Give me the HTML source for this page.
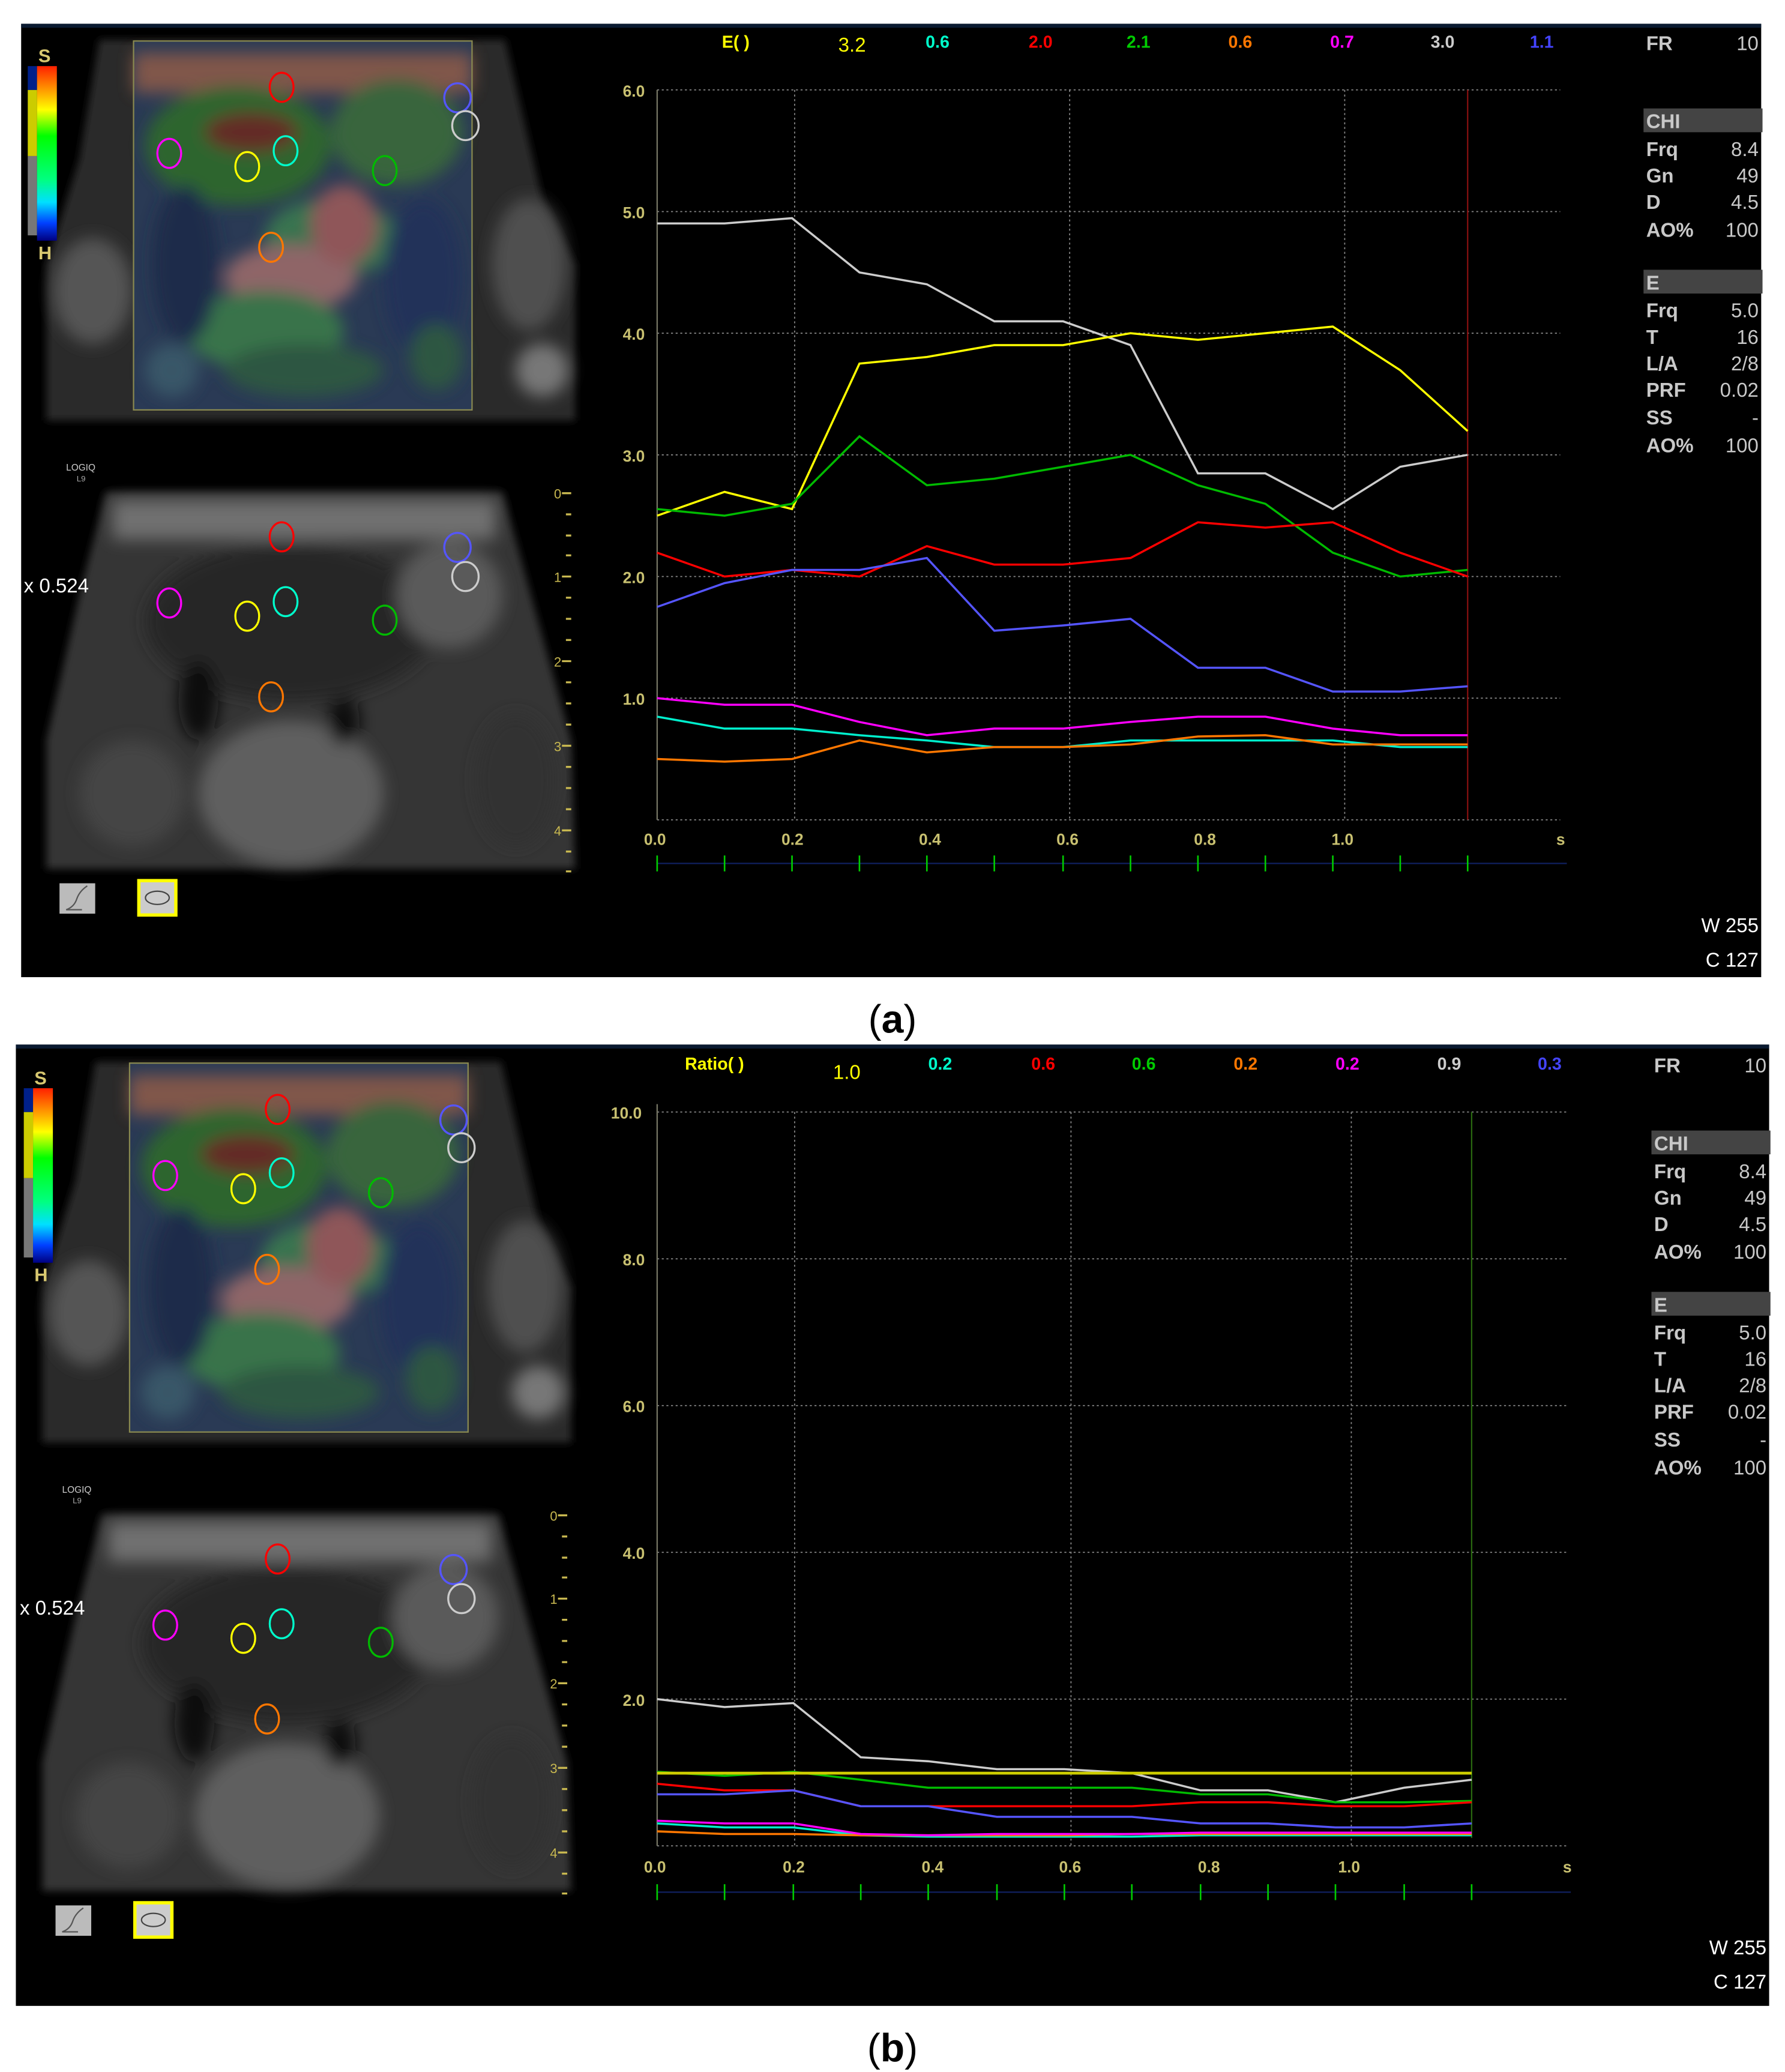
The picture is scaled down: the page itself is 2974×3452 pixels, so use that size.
<!DOCTYPE html>
<html><head><meta charset="utf-8"><style>
html,body{margin:0;padding:0;background:#fff;width:2974px;height:3452px;overflow:hidden}
svg{display:block}
text{font-family:"Liberation Sans",sans-serif}
</style></head><body>
<svg width="2974" height="3452" viewBox="0 0 1350 1567" preserveAspectRatio="none" xmlns="http://www.w3.org/2000/svg">
<defs>
<filter id="bl" x="-20%" y="-20%" width="140%" height="140%"><feGaussianBlur stdDeviation="6"/></filter>
<filter id="bl2" x="-20%" y="-20%" width="140%" height="140%"><feGaussianBlur stdDeviation="3"/></filter>
<linearGradient id="cb" x1="0" y1="0" x2="0" y2="1">
<stop offset="0" stop-color="#ff2000"/><stop offset="0.25" stop-color="#ffff00"/><stop offset="0.4" stop-color="#00ff00"/><stop offset="0.65" stop-color="#00ff80"/><stop offset="0.78" stop-color="#00e0ff"/><stop offset="0.9" stop-color="#0040ff"/><stop offset="1" stop-color="#000080"/>
</linearGradient>
<g id="left">
 <polygon points="75,30 382,30 410,150 435,200 435,318 35,318 35,200 60,120" fill="#2a2a2a" filter="url(#bl2)"/>
 <g filter="url(#bl)">
  <ellipse cx="70" cy="220" rx="30" ry="40" fill="#555"/>
  <ellipse cx="400" cy="200" rx="28" ry="50" fill="#505050"/>
  <ellipse cx="410" cy="280" rx="20" ry="20" fill="#777"/>
 </g>
 <rect x="101" y="31" width="256" height="279" fill="#2a3a55"/>
 <g filter="url(#bl)" opacity="0.9">
  <rect x="101" y="40" width="256" height="30" fill="#8a5a4a"/>
  <ellipse cx="180" cy="110" rx="70" ry="45" fill="#2d6a2a"/>
  <ellipse cx="190" cy="100" rx="35" ry="15" fill="#6a2a20"/>
  <ellipse cx="300" cy="100" rx="50" ry="40" fill="#3a6a3a"/>
  <ellipse cx="250" cy="180" rx="50" ry="30" fill="#3a7a50"/>
  <ellipse cx="220" cy="210" rx="50" ry="25" fill="#9a6a6a"/>
  <ellipse cx="260" cy="170" rx="25" ry="30" fill="#9a5a5a"/>
  <ellipse cx="200" cy="250" rx="60" ry="30" fill="#3a7a4a"/>
  <ellipse cx="140" cy="200" rx="25" ry="60" fill="#1e2a4a"/>
  <ellipse cx="320" cy="210" rx="30" ry="60" fill="#22305a"/>
  <ellipse cx="230" cy="280" rx="60" ry="20" fill="#2e5a40"/>
  <ellipse cx="330" cy="270" rx="20" ry="25" fill="#2e5a40"/>
  <ellipse cx="130" cy="280" rx="20" ry="20" fill="#3a5a6a"/>
 </g>
 <rect x="101" y="31" width="256" height="279" fill="none" stroke="#8a8a50" stroke-width="1"/>
 <rect x="21" y="68" width="7" height="50" fill="#ff0" opacity="0.8"/>
 <rect x="21" y="50" width="7" height="18" fill="#00208a"/>
 <rect x="21" y="118" width="7" height="60" fill="#777"/>
 <rect x="28" y="50" width="15" height="132" fill="url(#cb)"/>
 <text x="29" y="47" font-size="14" fill="#d8c870" font-weight="bold">S</text>
 <text x="29" y="196" font-size="14" fill="#d8c870" font-weight="bold">H</text>
 <text x="50" y="356" font-size="7" fill="#ccc">LOGIQ</text>
 <text x="58" y="364" font-size="6" fill="#aaa">L9</text>
 <polygon points="80,372 380,372 432,560 435,657 35,657 35,560 60,450" fill="#363636" filter="url(#bl2)"/>
 <g filter="url(#bl)">
  <rect x="85" y="378" width="290" height="30" fill="#707070"/>
  <ellipse cx="220" cy="470" rx="110" ry="60" fill="#262626"/>
  <ellipse cx="340" cy="450" rx="40" ry="40" fill="#5a5a5a"/>
  <ellipse cx="220" cy="600" rx="70" ry="55" fill="#5e5e5e"/>
  <ellipse cx="150" cy="530" rx="15" ry="30" fill="#111"/>
  <ellipse cx="260" cy="545" rx="12" ry="18" fill="#111"/>
  <ellipse cx="100" cy="600" rx="40" ry="40" fill="#444"/>
  <ellipse cx="390" cy="590" rx="30" ry="50" fill="#303030"/>
 </g>
 <text x="18" y="448" font-size="15" fill="#fff">x 0.524</text>
 <g fill="#c8b850" font-size="10">
  <text x="419" y="377">0</text><text x="419" y="440">1</text><text x="419" y="504">2</text><text x="419" y="568">3</text><text x="419" y="632">4</text>
 </g>
 <g stroke="#c8b850" stroke-width="1.5">
  <path d="M425,373h7M425,436h7M425,500h7M425,564h7M425,628h7M428,389h4M428,405h4M428,420h4M428,452h4M428,468h4M428,484h4M428,516h4M428,532h4M428,548h4M428,580h4M428,596h4M428,612h4M428,644h4M428,659h4"/>
 </g>
 <g fill="none" stroke-width="1.5">
  <ellipse cx="213" cy="66" rx="9" ry="11" stroke="#f00"/><ellipse cx="346" cy="74" rx="10" ry="11" stroke="#55f"/><ellipse cx="352" cy="95" rx="10" ry="11" stroke="#ccc"/><ellipse cx="128" cy="116" rx="9" ry="11" stroke="#f0f"/><ellipse cx="187" cy="126" rx="9" ry="11" stroke="#ff0"/><ellipse cx="216" cy="114" rx="9" ry="11" stroke="#0fc"/><ellipse cx="291" cy="129" rx="9" ry="11" stroke="#0b0"/><ellipse cx="205" cy="187" rx="9" ry="11" stroke="#f70"/>
  <ellipse cx="213" cy="406" rx="9" ry="11" stroke="#f00"/><ellipse cx="346" cy="414" rx="10" ry="11" stroke="#55f"/><ellipse cx="352" cy="436" rx="10" ry="11" stroke="#ccc"/><ellipse cx="128" cy="456" rx="9" ry="11" stroke="#f0f"/><ellipse cx="187" cy="466" rx="9" ry="11" stroke="#ff0"/><ellipse cx="216" cy="455" rx="9" ry="11" stroke="#0fc"/><ellipse cx="291" cy="469" rx="9" ry="11" stroke="#0b0"/><ellipse cx="205" cy="527" rx="9" ry="11" stroke="#f70"/>
 </g>
 <rect x="45" y="668" width="27" height="23" fill="#bbb"/>
 <path d="M50,688 q6,-2 8,-8 q2,-6 8,-10 M50,688 l12,0" stroke="#555" fill="none" stroke-width="1"/>
 <rect x="105" y="666" width="28" height="26" fill="#ccc" stroke="#ff0" stroke-width="2.5"/>
 <ellipse cx="119" cy="679" rx="9" ry="5" fill="none" stroke="#444" stroke-width="1"/>
</g>
<g id="infoR" font-size="15" fill="#c8c8c8" font-weight="bold">
 <text x="0" y="0">FR</text><text x="85" y="0" text-anchor="end" font-weight="normal">10</text>
 <rect x="-2" y="44" width="90" height="18" fill="#444"/>
 <text x="0" y="59">CHI</text>
 <text x="0" y="80">Frq</text><text x="85" y="80" text-anchor="end" font-weight="normal">8.4</text>
 <text x="0" y="100">Gn</text><text x="85" y="100" text-anchor="end" font-weight="normal">49</text>
 <text x="0" y="120">D</text><text x="85" y="120" text-anchor="end" font-weight="normal">4.5</text>
 <text x="0" y="141">AO%</text><text x="85" y="141" text-anchor="end" font-weight="normal">100</text>
 <rect x="-2" y="166" width="90" height="18" fill="#444"/>
 <text x="0" y="181">E</text>
 <text x="0" y="202">Frq</text><text x="85" y="202" text-anchor="end" font-weight="normal">5.0</text>
 <text x="0" y="222">T</text><text x="85" y="222" text-anchor="end" font-weight="normal">16</text>
 <text x="0" y="242">L/A</text><text x="85" y="242" text-anchor="end" font-weight="normal">2/8</text>
 <text x="0" y="262">PRF</text><text x="85" y="262" text-anchor="end" font-weight="normal">0.02</text>
 <text x="0" y="283">SS</text><text x="85" y="283" text-anchor="end" font-weight="normal">-</text>
 <text x="0" y="304">AO%</text><text x="85" y="304" text-anchor="end" font-weight="normal">100</text>
 <text x="85" y="667" text-anchor="end" font-weight="normal" fill="#fff">W 255</text>
 <text x="85" y="693" text-anchor="end" font-weight="normal" fill="#fff">C 127</text>
</g>
</defs>

<rect x="16" y="18" width="1316" height="721" fill="#000"/>
<rect x="16" y="18" width="1316" height="3" fill="#0a1a30"/>
<use href="#left"/>
<use href="#infoR" x="1245" y="38"/>
<g font-size="13" font-weight="bold">
 <text x="546" y="36" fill="#ff0">E( )</text>
 <text x="634" y="39" fill="#ff0" font-weight="normal" font-size="15">3.2</text>
 <text x="700" y="36" fill="#0fc">0.6</text>
 <text x="778" y="36" fill="#f00">2.0</text>
 <text x="852" y="36" fill="#0c0">2.1</text>
 <text x="929" y="36" fill="#f70">0.6</text>
 <text x="1006" y="36" fill="#f0f">0.7</text>
 <text x="1082" y="36" fill="#ccc">3.0</text>
 <text x="1157" y="36" fill="#44f">1.1</text>
</g>
<g stroke="#888" stroke-width="0.8" stroke-dasharray="1.5,2" fill="none">
 <path d="M497,68H1180M497,160H1180M497,252H1180M497,344H1180M497,436H1180M497,528H1180M497,620H1180"/>
 <path d="M601,68V620M809,68V620M1017,68V620"/>
</g>
<path d="M497,68V620" stroke="#776" stroke-width="1"/>
<path d="M1110,68V620" stroke="#8a1010" stroke-width="1"/>
<g font-size="12" fill="#c8c070" font-weight="bold">
 <text x="471" y="73">6.0</text><text x="471" y="165">5.0</text><text x="471" y="257">4.0</text><text x="471" y="349">3.0</text><text x="471" y="441">2.0</text><text x="471" y="533">1.0</text>
 <text x="487" y="639">0.0</text><text x="591" y="639">0.2</text><text x="695" y="639">0.4</text><text x="799" y="639">0.6</text><text x="903" y="639">0.8</text><text x="1007" y="639">1.0</text><text x="1177" y="639">s</text>
</g>
<path d="M497,653H1185" stroke="#102060" stroke-width="1"/>
<path d="M497,647v12M548,647v12M599,647v12M650,647v12M701,647v12M752,647v12M804,647v12M855,647v12M906,647v12M957,647v12M1008,647v12M1059,647v12M1110,647v12" stroke="#0c0" stroke-width="1.2"/>
<g fill="none" stroke-width="1.6">
 <polyline stroke="#ccc" points="497,169 548,169 599,165 650,206 701,215 752,243 804,243 855,261 906,358 957,358 1008,385 1059,353 1110,344"/>
 <polyline stroke="#ff0" points="497,390 548,372 599,385 650,275 701,270 752,261 804,261 855,252 906,257 957,252 1008,247 1059,280 1110,326"/>
 <polyline stroke="#0b0" points="497,385 548,390 599,381 650,330 701,367 752,362 804,353 855,344 906,367 957,381 1008,418 1059,436 1110,431"/>
 <polyline stroke="#f00" points="497,418 548,436 599,431 650,436 701,413 752,427 804,427 855,422 906,395 957,399 1008,395 1059,418 1110,436"/>
 <polyline stroke="#55f" points="497,459 548,441 599,431 650,431 701,422 752,477 804,473 855,468 906,505 957,505 1008,523 1059,523 1110,519"/>
 <polyline stroke="#f0f" points="497,528 548,533 599,533 650,546 701,556 752,551 804,551 855,546 906,542 957,542 1008,551 1059,556 1110,556"/>
 <polyline stroke="#0ec" points="497,542 548,551 599,551 650,556 701,560 752,565 804,565 855,560 906,560 957,560 1008,560 1059,565 1110,565"/>
 <polyline stroke="#f70" points="497,574 548,576 599,574 650,560 701,569 752,565 804,565 855,563 906,557 957,556 1008,563 1059,563 1110,563"/>
</g>
<text x="675" y="781" font-size="30" fill="#000" text-anchor="middle" font-family="Liberation Serif">(<tspan font-weight="bold">a</tspan>)</text>

<rect x="12" y="790" width="1326" height="727" fill="#000"/>
<rect x="12" y="790" width="1326" height="3" fill="#0a1a30"/>
<use href="#left" transform="translate(-3,773)"/>
<use href="#infoR" x="1251" y="811"/>
<g font-size="13" font-weight="bold">
 <text x="518" y="809" fill="#ff0">Ratio( )</text>
 <text x="630" y="816" fill="#ff0" font-weight="normal" font-size="15">1.0</text>
 <text x="702" y="809" fill="#0fc">0.2</text>
 <text x="780" y="809" fill="#f00">0.6</text>
 <text x="856" y="809" fill="#0c0">0.6</text>
 <text x="933" y="809" fill="#f70">0.2</text>
 <text x="1010" y="809" fill="#f0f">0.2</text>
 <text x="1087" y="809" fill="#ccc">0.9</text>
 <text x="1163" y="809" fill="#44f">0.3</text>
</g>
<g stroke="#888" stroke-width="0.8" stroke-dasharray="1.5,2" fill="none">
 <path d="M497,841H1185M497,952H1185M497,1063H1185M497,1174H1185M497,1285H1185M497,1396H1185"/>
 <path d="M601,841V1396M810,841V1396M1022,841V1396"/>
</g>
<path d="M497,835V1396" stroke="#776" stroke-width="1"/>
<path d="M1113,841V1390" stroke="#2a6a10" stroke-width="1"/>
<g font-size="12" fill="#c8c070" font-weight="bold">
 <text x="462" y="846">10.0</text><text x="471" y="957">8.0</text><text x="471" y="1068">6.0</text><text x="471" y="1179">4.0</text><text x="471" y="1290">2.0</text>
 <text x="487" y="1416">0.0</text><text x="592" y="1416">0.2</text><text x="697" y="1416">0.4</text><text x="801" y="1416">0.6</text><text x="906" y="1416">0.8</text><text x="1012" y="1416">1.0</text><text x="1182" y="1416">s</text>
</g>
<path d="M497,1431H1188" stroke="#102060" stroke-width="1"/>
<path d="M497,1425v12M548,1425v12M600,1425v12M651,1425v12M702,1425v12M754,1425v12M805,1425v12M856,1425v12M908,1425v12M959,1425v12M1010,1425v12M1062,1425v12M1113,1425v12" stroke="#0c0" stroke-width="1.2"/>
<g fill="none" stroke-width="1.6">
 <polyline stroke="#ccc" points="497,1285 548,1291 600,1288 651,1329 702,1332 754,1338 805,1338 856,1341 908,1354 959,1354 1010,1363 1062,1352 1113,1346"/>
 <polyline stroke="#0b0" points="497,1340 548,1343 600,1340 651,1346 702,1352 754,1352 805,1352 856,1352 908,1357 959,1357 1010,1363 1062,1363 1113,1362"/>
 <polyline stroke="#f00" points="497,1349 548,1354 600,1354 651,1366 702,1366 754,1366 805,1366 856,1366 908,1363 959,1363 1010,1366 1062,1366 1113,1363"/>
 <polyline stroke="#55f" points="497,1357 548,1357 600,1354 651,1366 702,1366 754,1374 805,1374 856,1374 908,1379 959,1379 1010,1382 1062,1382 1113,1379"/>
 <polyline stroke="#0ec" points="497,1379 548,1382 600,1382 651,1388 702,1389 754,1389 805,1389 856,1389 908,1388 959,1388 1010,1388 1062,1388 1113,1388"/>
 <polyline stroke="#f70" points="497,1385 548,1387 600,1387 651,1388 702,1388 754,1388 805,1388 856,1387 908,1387 959,1387 1010,1387 1062,1387 1113,1387"/>
 <polyline stroke="#f0f" points="497,1377 548,1379 600,1379 651,1387 702,1388 754,1387 805,1387 856,1387 908,1386 959,1386 1010,1386 1062,1386 1113,1386"/>
 <polyline stroke="#cc0" stroke-width="2.2" points="497,1341 1113,1341"/>
</g>
<text x="675" y="1559" font-size="30" fill="#000" text-anchor="middle" font-family="Liberation Serif">(<tspan font-weight="bold">b</tspan>)</text>
</svg>
</body></html>
